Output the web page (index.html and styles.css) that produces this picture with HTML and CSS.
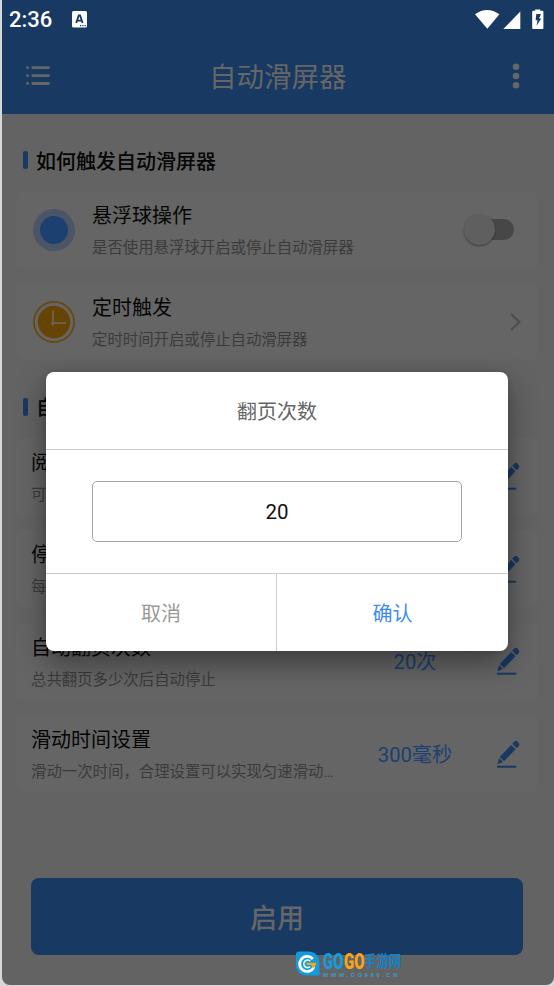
FILE: index.html
```html
<!DOCTYPE html>
<html lang="zh-CN">
<head>
<meta charset="utf-8">
<title>自动滑屏器</title>
<link rel="stylesheet" href="styles.css">
</head>
<body>
<svg class="defs" width="0" height="0">
  <symbol id="pencil" viewBox="0 0 24 28">
    <path d="M16.2 3.8 18.6 1.3Q20.1.2 21.8 1.9 24.3 4.2 22.8 6L20.6 8.3ZM15.2 4.9 19.6 9.3 8 21.2 3.8 17ZM3.1 18 7 21.9 1.4 24.2Z"/>
    <path d="M1 26.7H20.2" class="pencil-base"/>
  </symbol>
</svg>
<div class="phone">
  <header class="top">
    <div class="status">
      <span class="clock">2:36</span>
      <svg class="ime" viewBox="0 0 15 17"><rect width="15" height="16.5" rx="1.6" fill="#fff"/><path d="M4.2 12 6.7 4.4h1.4l2.5 7.6M5.4 9.6h4" fill="none" stroke="#183962" stroke-width="1.8"/><path d="M8 14.6h1.2M10.3 14.6h1.2M12.6 14.6h1.2" stroke="#183962" stroke-width="1.2"/></svg>
      <span class="spacer"></span>
      <svg class="signals" viewBox="0 0 70 21"><g fill="#fff"><path d="M0 5.2Q12-3.3 24.4 5.2L12.3 19.8Z"/><path d="M45.3 2.6V20H28.3Z"/><path d="M57.2 2.8q0-1 1-1h2V.4h5v1.4h2.2q1 0 1 1V19q0 1-1 1h-9.2q-1 0-1-1Z"/></g><path d="M61.3 5h4.6l-1.8 4.5h2.2l-4.8 7.2 1.1-5.5h-2Z" fill="#183962"/></svg>
    </div>
    <div class="toolbar">
      <svg class="menu" viewBox="0 0 24 20"><path d="M6.8 1.7H22.5M6.8 9.7H22.5M6.8 17.5H22.5M1.5 1.7h.1M1.5 9.7h.1M1.5 17.5h.1"/></svg>
      <h1>自动滑屏器</h1>
      <svg class="more" viewBox="0 0 8 26"><circle cx="4" cy="3.7" r="3.3"/><circle cx="4" cy="13" r="3.3"/><circle cx="4" cy="22.3" r="3.3"/></svg>
    </div>
  </header>
  <main>
    <h2>如何触发自动滑屏器</h2>
    <section class="cards">
      <div class="card lead">
        <svg class="glyph" viewBox="0 0 42 42"><circle cx="21" cy="21" r="21" fill="#4b5565"/><circle cx="21" cy="21" r="14" fill="#1c406f"/></svg>
        <div class="copy"><h3>悬浮球操作</h3><p>是否使用悬浮球开启或停止自动滑屏器</p></div>
        <span class="switch"></span>
      </div>
      <div class="card lead">
        <svg class="glyph" viewBox="0 0 42 42"><circle cx="21" cy="21" r="20.1" fill="none" stroke="#66480e" stroke-width="1.7"/><circle cx="21" cy="21" r="16.2" fill="#664504"/><path d="M20 9.3V24.8M18 22.2H33" fill="none" stroke="#6c6453" stroke-width="1.8"/></svg>
        <div class="copy"><h3>定时触发</h3><p>定时时间开启或停止自动滑屏器</p></div>
        <svg class="chevron" viewBox="0 0 11 18"><path d="M1 1 9.4 9 1 17"/></svg>
      </div>
    </section>
    <h2>自动滑屏设置</h2>
    <section class="cards">
      <div class="card"><div class="copy"><h3>阅读时间</h3><p>可设置每页停留时间</p></div><svg class="edit"><use href="#pencil"/></svg></div>
      <div class="card"><div class="copy"><h3>停顿时间</h3><p>每次翻页后的停顿</p></div><svg class="edit"><use href="#pencil"/></svg></div>
      <div class="card"><div class="copy"><h3>自动翻页次数</h3><p>总共翻页多少次后自动停止</p></div><span class="value">20次</span><svg class="edit"><use href="#pencil"/></svg></div>
      <div class="card"><div class="copy"><h3>滑动时间设置</h3><p>滑动一次时间，合理设置可以实现匀速滑动…</p></div><span class="value">300毫秒</span><svg class="edit"><use href="#pencil"/></svg></div>
    </section>
    <button class="start">启用</button>
  </main>
</div>
<div class="dialog">
  <div class="dialog-title">翻页次数</div>
  <div class="dialog-body"><div class="field">20</div></div>
  <div class="actions"><span class="cancel">取消</span><span class="confirm">确认</span></div>
</div>
<div class="watermark">
  <svg viewBox="0 0 25 25"><path d="M1 3Q1 .5 4 .5H13Q24.5 1 24.5 13V24.5H12Q1 24 1 13Z" fill="#139bdc"/><path d="M17.8 8A7.5 7.5 0 1 0 19 16" fill="none" stroke="#fff" stroke-width="2.8"/><path d="M15.2 10.2A3.7 3.7 0 1 0 15 15.6" fill="none" stroke="#dff4ff" stroke-width="1.8"/><path d="M11 11.8H21.5Q20.8 16 17.5 17.5L16.5 14H12Z" fill="#f9a51b"/></svg>
  <div class="brand">
    <div class="brand-name"><span class="go">GO</span><span class="go orange">GO</span><span class="cn">手游网</span></div>
    <div class="url">WWW.GO960.CN</div>
  </div>
</div>
</body>
</html>
```
FILE: styles.css
```css
* { box-sizing: border-box; margin: 0; padding: 0; }
html { background: #d6d8d8; }
body {
  position: relative;
  width: 554px;
  height: 986px;
  overflow: hidden;
  padding-left: 2px;
  font-family: Roboto, "Noto Sans CJK SC", sans-serif;
}
.defs { position: absolute; }
.phone {
  width: 552px;
  height: 985px;
  background: #636363;
  border-radius: 0 0 8px 8px;
  overflow: hidden;
}
.top { height: 114px; background: #183962; }
.status { display: flex; align-items: center; height: 38px; padding: 0 9px 0 7px; }
.clock { width: 63px; font-size: 22px; font-weight: 500; color: #fff; line-height: 38px; padding-top: 2px; }
.ime { width: 15px; height: 17px; }
.spacer { flex: 1; }
.signals { width: 70px; height: 21px; }
.toolbar { display: flex; align-items: center; height: 76px; padding: 0 34.5px 0 24px; }
.toolbar h1 { flex: 1; padding: 3px 0 0 2px; text-align: center; font-size: 27.5px; font-weight: 400; color: #666; line-height: 40px; margin-right: 8px; }
.menu { width: 24px; height: 20px; fill: none; stroke: #666; stroke-width: 2.8; stroke-linecap: round; }
.more { width: 8px; height: 26px; fill: #666; }
main { padding: 31px 16px 0 14px; }
h2 {
  display: flex;
  align-items: center;
  gap: 8px;
  height: 30px;
  padding-left: 7px;
  font-size: 20px;
  font-weight: 500;
  color: #050505;
}
h2::before { content: ""; width: 5px; height: 18px; border-radius: 2px; background: #183962; }
.cards { display: grid; gap: 15.4px; padding: 16px 0; }
.cards + h2 { margin-top: 15.5px; }
.card {
  display: flex;
  align-items: center;
  height: 77px;
  padding: 0 18px 0 15px;
  border-radius: 8px;
  background: #656565;
}
.lead { padding: 0 17px; }
.glyph { width: 42px; height: 42px; margin-right: 17px; }
.copy { flex: 1; white-space: nowrap; padding-top: 2px; }
.copy h3 { font-size: 20px; font-weight: 400; line-height: 30px; color: #050505; }
.copy p { font-size: 15.4px; line-height: 24px; margin-top: 5px; color: #3b3b3b; }
.switch { position: relative; width: 43px; height: 21px; margin-right: 7px; border-radius: 11px; background: #474747; }
.switch::before {
  content: "";
  position: absolute;
  left: -7px;
  top: -5px;
  width: 31px;
  height: 31px;
  border-radius: 50%;
  background: #5f5f5f;
  box-shadow: 0 1px 2px rgba(0, 0, 0, .4);
}
.chevron { width: 11px; height: 18px; fill: none; stroke: #4c4c4c; stroke-width: 2; }
.value { width: 110px; margin-right: 26px; padding-bottom: 1px; text-align: center; font-size: 20.2px; color: #1b4072; }
.edit { width: 24px; height: 28px; fill: #183962; }
.pencil-base { stroke: #183962; stroke-width: 2; }
.start {
  display: block;
  width: 492px;
  height: 77px;
  margin: 69.5px 0 0 15px;
  border: 0;
  border-radius: 8px;
  background: #183962;
  color: #666;
  font: 500 27px Roboto, "Noto Sans CJK SC", sans-serif;
}
.dialog {
  position: absolute;
  left: 46px;
  top: 372px;
  width: 462px;
  height: 279px;
  display: flex;
  flex-direction: column;
  border-radius: 8px;
  background: #fff;
  box-shadow: 0 12px 30px rgba(0, 0, 0, .4), 0 0 6px rgba(0, 0, 0, .12);
  font-size: 20px;
  overflow: hidden;
}
.dialog-title { height: 78px; line-height: 81px; border-bottom: 1px solid #ccc; text-align: center; color: #666; }
.dialog-body { flex: 1; padding: 31px 46px; }
.field { height: 61px; line-height: 61px; border: 1px solid #a5a5a5; border-radius: 5px; text-align: center; color: #111; font-size: 20.5px; }
.actions { display: flex; height: 78px; border-top: 1px solid #ccc; text-align: center; line-height: 81px; }
.cancel { width: 231px; border-right: 1px solid #ccc; color: #999; }
.confirm { flex: 1; color: #3d8bf0; }
.watermark { position: absolute; left: 295px; top: 951px; display: flex; gap: 3px; }
.watermark svg { width: 25px; height: 25px; }
.brand { width: 80px; }
.brand-name { display: flex; align-items: center; height: 21px; }
.go { width: 20.5px; font: 900 22px/21px Roboto, sans-serif; color: #139ddf; white-space: nowrap; transform: scaleX(.68); transform-origin: left center; }
.orange { color: #f9a51b; }
.cn { font: 700 12.4px/15px "Noto Sans CJK SC", sans-serif; color: #1681c4; white-space: nowrap; transform: scaleY(1.25); }
.url { margin-top: 1px; font: 700 5.5px/5px "Liberation Sans", sans-serif; letter-spacing: 2.75px; color: #3e9ccb; white-space: nowrap; }
```
